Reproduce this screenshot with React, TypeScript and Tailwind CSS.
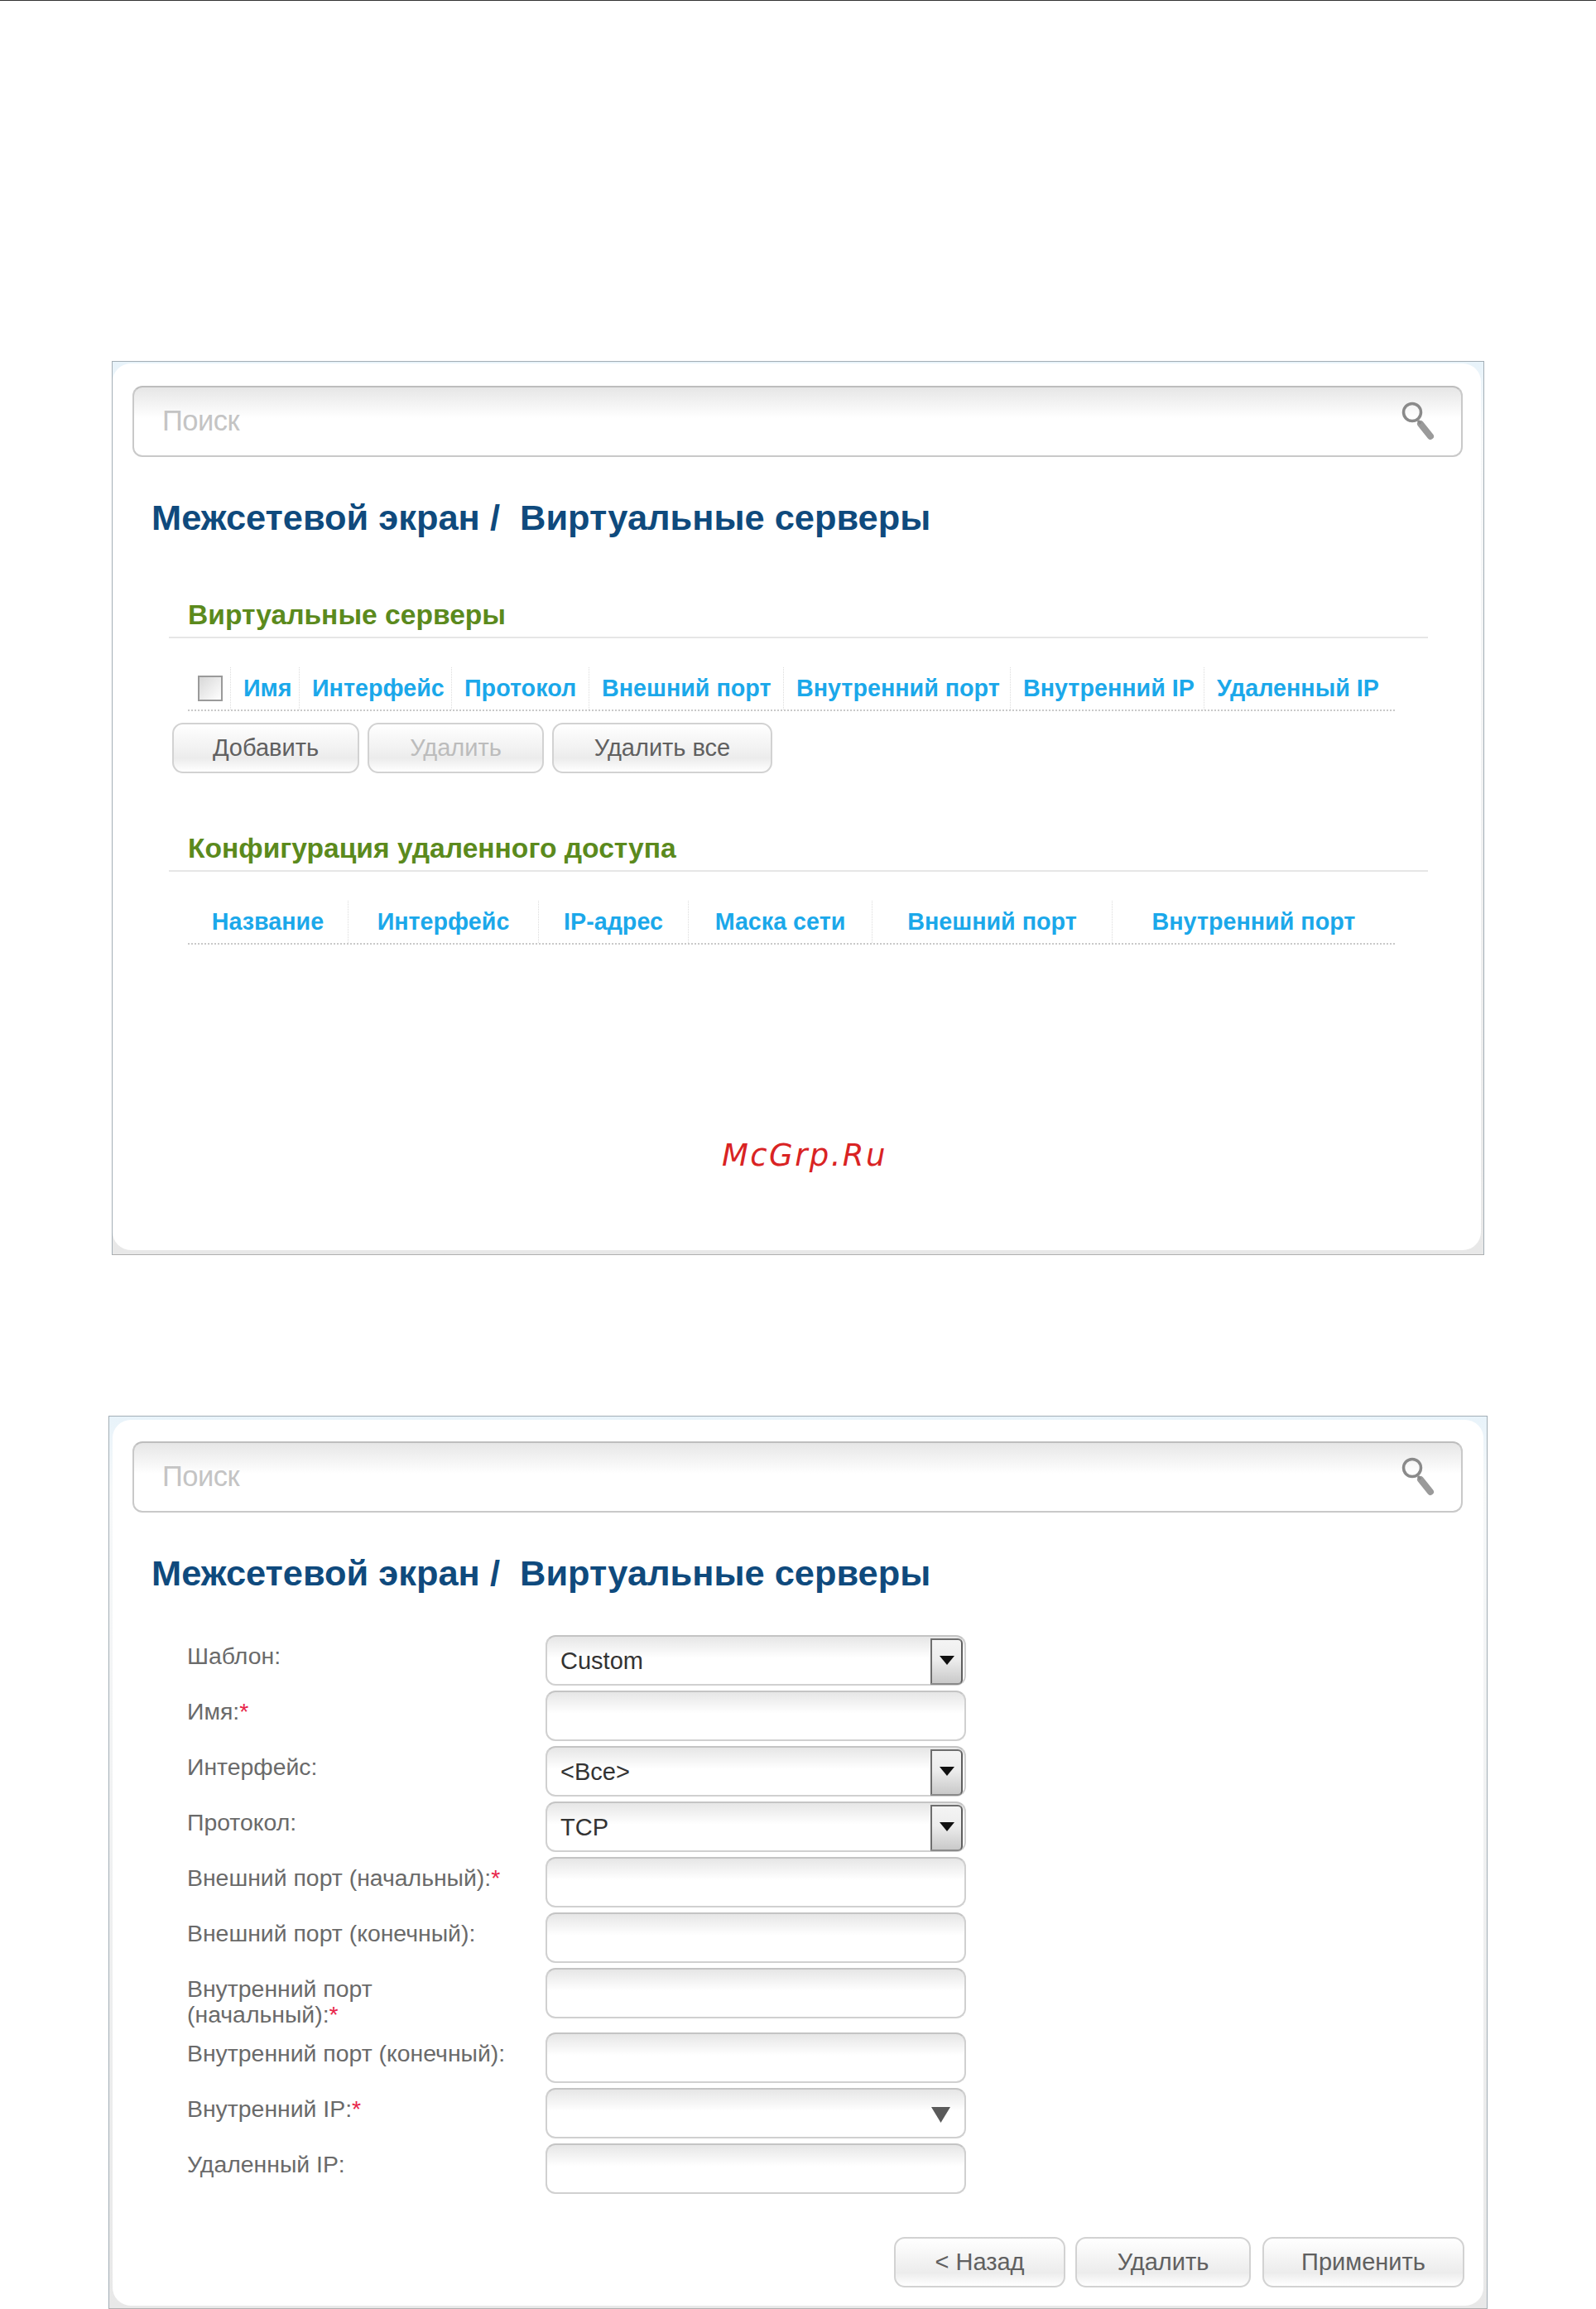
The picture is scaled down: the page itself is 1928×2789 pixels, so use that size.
const sans = "font-['Liberation_Sans',Arial,sans-serif]";

function SearchIcon() {
  return (
    <svg width="46" height="50" viewBox="0 0 46 50" className="shrink-0">
      <circle cx="14" cy="14" r="10.5" fill="none" stroke="#8a8a8a" strokeWidth="3.5" />
      <path d="M24 28 L36 43" stroke="#9a9a9a" strokeWidth="8" strokeLinecap="round" />
      <path d="M21 24 L24 28" stroke="#8a8a8a" strokeWidth="3" />
    </svg>
  );
}

function SearchBar() {
  return (
    <div className="flex h-[86px] w-[1607px] items-center justify-between rounded-[12px] border-2 border-[#c9c9c9] border-t-[#bdbdbd] bg-gradient-to-b from-[#e6e6e6] via-white via-[45%] to-white pl-[34px] pr-[27px]">
      <span className="text-[34.5px] tracking-[-0.5px] text-[#c4c4c4]">Поиск</span>
      <SearchIcon />
    </div>
  );
}

function Heading() {
  return (
    <h1 className="ml-[23px] mt-[48px] h-[50px] whitespace-pre text-[43.4px] font-bold leading-[50px] text-[#0f4a7d]">
      {"Межсетевой экран /  Виртуальные серверы"}
    </h1>
  );
}

function SectionTitle({ children, mt }: { children: string; mt: string }) {
  return (
    <div className={`${mt} ml-[44px] h-[53px] w-[1521px] border-b-2 border-[#e6e6e6] pl-[23px] text-[33.6px] font-bold leading-[49px] text-[#5b8a1d]`}>
      {children}
    </div>
  );
}

function Th({ w, children, center, last }: { w: string; children?: React.ReactNode; center?: boolean; last?: boolean }) {
  return (
    <div
      className={`${w} flex h-full items-center ${center ? "justify-center" : "pl-[15px]"} ${last ? "" : "border-r border-dotted border-[#dcdcdc]"} whitespace-nowrap text-[28.7px] font-bold text-[#1ba8ea]`}
    >
      {children}
    </div>
  );
}

function Btn({ w, children, disabled }: { w: string; children: string; disabled?: boolean }) {
  return (
    <div
      className={`${w} flex h-[61px] items-center justify-center rounded-[13px] border-2 border-[#d2d2d2] bg-gradient-to-b from-white via-[#ececec] via-[72%] to-white text-[29px] ${disabled ? "text-[#bcbcbc]" : "text-[#606060]"}`}
    >
      {children}
    </div>
  );
}

function Arrow() {
  return (
    <div className="absolute right-[2px] top-[2px] flex h-[56px] w-[39px] items-start justify-center rounded-r-[6px] border-2 border-[#6e6e6e] border-b-[#8a8a8a] border-r-[#5e5e5e] bg-gradient-to-b from-[#f4f4f4] via-[#ededed] via-[45%] to-[#c9c9c9] pt-[19px]">
      <svg width="18" height="11" viewBox="0 0 18 11">
        <path d="M0 0 H18 L9 11 Z" fill="#111" />
      </svg>
    </div>
  );
}

function Field({ value, select, combo }: { value?: string; select?: boolean; combo?: boolean }) {
  return (
    <div className="relative flex h-[61px] w-[508px] shrink-0 items-center rounded-[12px] border-2 border-[#d0d0d0] border-t-[#c4c4c4] bg-gradient-to-b from-[#e6e6e6] via-white via-[45%] to-white pl-[16px] pt-[2px] text-[29px] text-[#333]">
      {value}
      {select && <Arrow />}
      {combo && (
        <svg width="23" height="19" viewBox="0 0 23 19" className="absolute right-[17px] top-[21px]">
          <path d="M0 0 H23 L11.5 19 Z" fill="#5a5a5a" />
        </svg>
      )}
    </div>
  );
}

function Row({ label, req, value, select, combo }: { label: React.ReactNode; req?: boolean; value?: string; select?: boolean; combo?: boolean }) {
  return (
    <div className="flex items-start">
      <div className="w-[433px] pr-[30px] pt-[10px] text-[28.4px] leading-[31px] text-[#6a6a6a]">
        {label}
        {req && <span className="text-[#e8264a]">*</span>}
      </div>
      <Field value={value} select={select} combo={combo} />
    </div>
  );
}

function Panel({ outer, inner, children }: { outer: string; inner: string; children: React.ReactNode }) {
  return (
    <div className={`${outer} flex flex-col border border-[#a3aeb6] border-b-[#b0b0b0] bg-gradient-to-b from-[#e8f3fa] via-[#f6f8f9] via-[8%] to-[#e8e8e8]`}>
      <div className={`${inner} flex-1 rounded-[22px] bg-white`}>{children}</div>
    </div>
  );
}

export default function App() {
  return (
    <div className={`${sans} h-[2789px] w-[1928px] overflow-hidden border-t border-[#333] bg-white`}>
      <Panel outer="ml-[135px] mt-[435px] h-[1080px] w-[1658px]" inner="ml-0 mr-[3px] mb-[5px] mt-[2px] pl-[24px] pt-[27px]">
        <SearchBar />
        <Heading />
        <SectionTitle mt="mt-[68px]">Виртуальные серверы</SectionTitle>
        <div className="ml-[67px] mt-[35px] flex h-[53px] w-[1458px] border-b-2 border-dotted border-[#c9c9c9]">
          <div className="flex h-full w-[52px] items-center justify-center border-r border-dotted border-[#dcdcdc] pl-[3px]">
            <div className="h-[31px] w-[30px] border-2 border-[#9a9a9a] bg-gradient-to-br from-[#d8d8d8] to-white" />
          </div>
          <Th w="w-[83px]">Имя</Th>
          <Th w="w-[184px]">Интерфейс</Th>
          <Th w="w-[166px]">Протокол</Th>
          <Th w="w-[235px]">Внешний порт</Th>
          <Th w="w-[274px]">Внутренний порт</Th>
          <Th w="w-[234px]">Внутренний IP</Th>
          <Th w="w-[230px]" last>Удаленный IP</Th>
        </div>
        <div className="ml-[48px] mt-[14px] flex gap-[10px]">
          <Btn w="w-[226px]">Добавить</Btn>
          <Btn w="w-[213px]" disabled>Удалить</Btn>
          <Btn w="w-[266px]">Удалить все</Btn>
        </div>
        <SectionTitle mt="mt-[66px]">Конфигурация удаленного доступа</SectionTitle>
        <div className="ml-[67px] mt-[35px] flex h-[53px] w-[1458px] border-b-2 border-dotted border-[#c9c9c9]">
          <Th w="w-[194px]" center>Название</Th>
          <Th w="w-[230px]" center>Интерфейс</Th>
          <Th w="w-[181px]" center>IP-адрес</Th>
          <Th w="w-[222px]" center>Маска сети</Th>
          <Th w="w-[290px]" center>Внешний порт</Th>
          <Th w="w-[341px]" center last>Внутренний порт</Th>
        </div>
        <div className="ml-[712px] mt-[234px] font-['DejaVu_Sans',sans-serif] text-[37px] italic leading-[42px] tracking-[2.4px] text-[#d92323]">
          McGrp.Ru
        </div>
      </Panel>

      <Panel outer="ml-[131px] mt-[194px] h-[1079px] w-[1666px]" inner="mx-[4px] mt-[4px] mb-[3px] pl-[24px] pt-[26px]">
        <SearchBar />
        <Heading />
        <div className="ml-[66px] mt-[50px] flex flex-col gap-[6px]">
          <Row label="Шаблон:" value="Custom" select />
          <Row label="Имя:" req />
          <Row label="Интерфейс:" value="<Все>" select />
          <Row label="Протокол:" value="TCP" select />
          <Row label="Внешний порт (начальный):" req />
          <Row label="Внешний порт (конечный):" />
          <Row label={<>Внутренний порт<br />(начальный):</>} req />
          <Row label="Внутренний порт (конечный):" />
          <Row label="Внутренний IP:" req combo />
          <Row label="Удаленный IP:" />
        </div>
        <div className="ml-[920px] mt-[52px] flex gap-[12px]">
          <Btn w="w-[207px]">{"< Назад"}</Btn>
          <Btn w="w-[212px]">Удалить</Btn>
          <div className="ml-[2px]"><Btn w="w-[244px]">Применить</Btn></div>
        </div>
      </Panel>
    </div>
  );
}
